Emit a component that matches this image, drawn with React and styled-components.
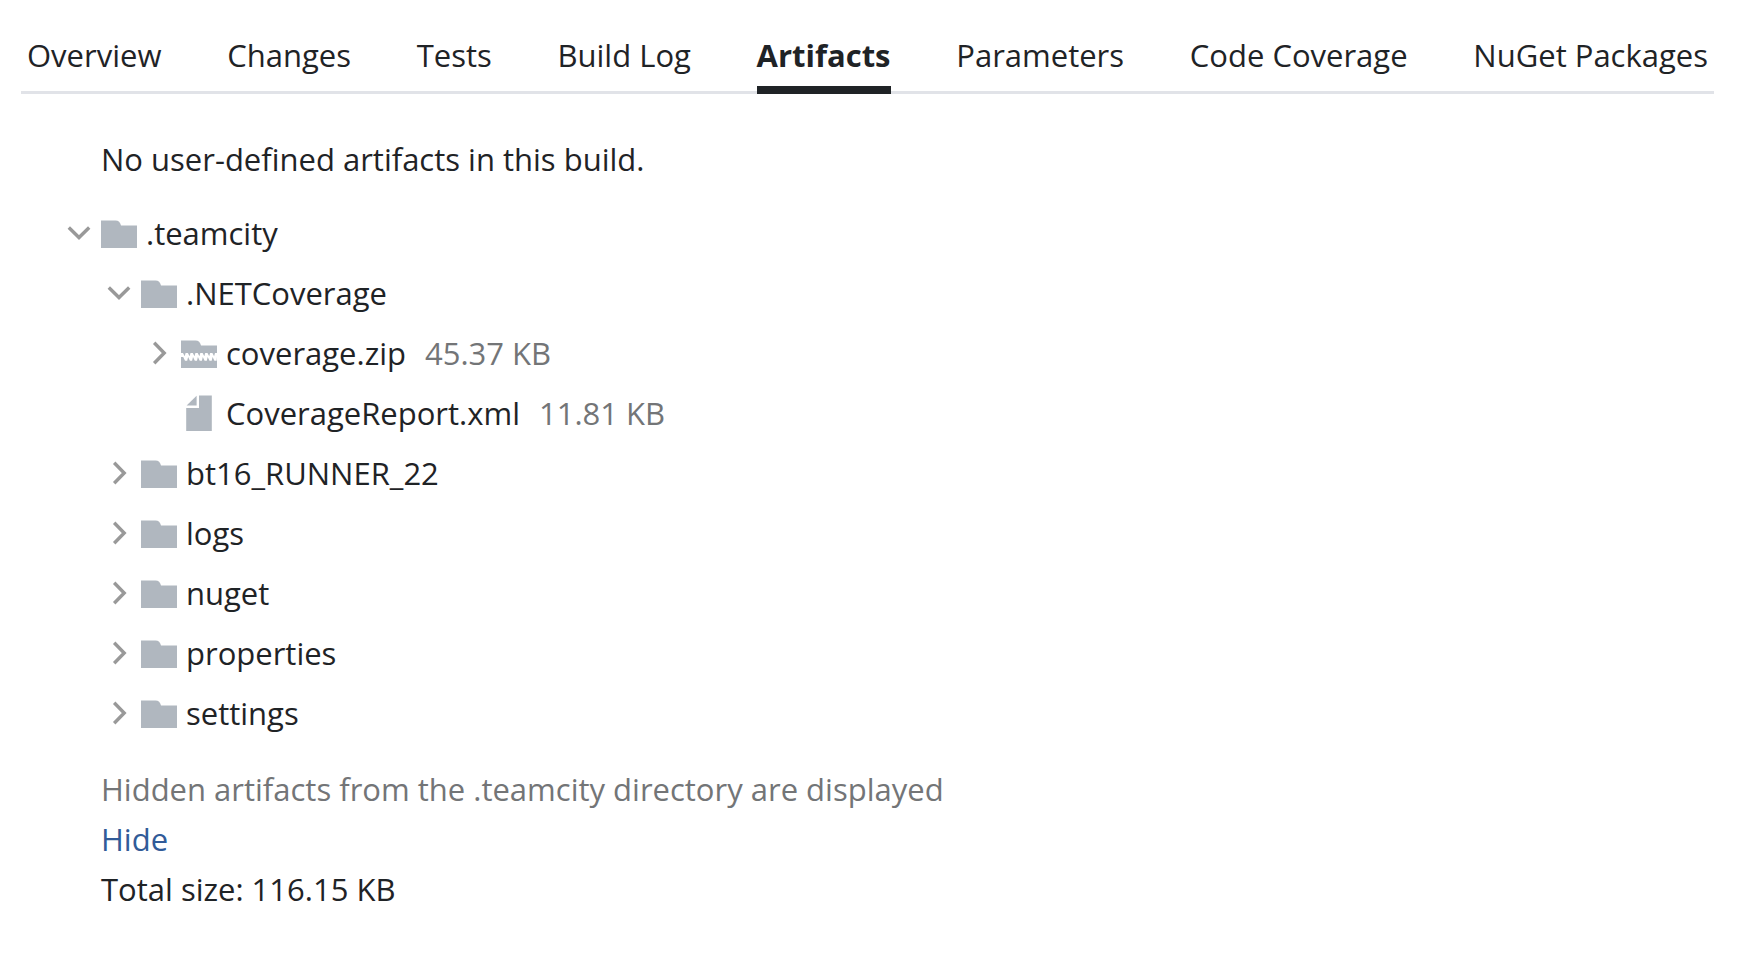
import React, { useState } from 'react';
import styled, { createGlobalStyle } from 'styled-components';

const GlobalStyle = createGlobalStyle`
  * {
    box-sizing: border-box;
  }

  body {
    margin: 0;
    background: #fff;
    color: #1f2326;
    font-family: 'Segoe UI', 'Open Sans', 'Noto Sans', sans-serif;
    font-size: 31px;
    line-height: 50px;
  }
`;

const Page = styled.div`
  padding: 30px 41px 30px 21px;
`;

const Tabs = styled.nav`
  display: flex;
  justify-content: space-between;
  padding: 0 6px;
  border-bottom: 3px solid #e1e3e8;
`;

const Tab = styled.a`
  height: 64px;
  margin-bottom: -3px;
  border-bottom: 8px solid ${props => (props.$active ? '#1f2326' : 'transparent')};
  color: inherit;
  font-weight: ${props => (props.$active ? 700 : 400)};
  line-height: 50px;
  text-decoration: none;
  white-space: nowrap;
`;

const Content = styled.main`
  padding: 40px 0 0 40px;
`;

const Text = styled.p`
  margin: 0;
  padding-left: 40px;
  color: ${props => (props.$muted ? '#737577' : 'inherit')};
`;

const Tree = styled.ul`
  margin: 0;
  padding: 0;
  list-style: none;
`;

const RootTree = styled(Tree)`
  padding: 19px 0 21px;
`;

const SubTree = styled(Tree)`
  padding-left: 40px;
`;

const Row = styled.div`
  display: flex;
  align-items: center;
  height: 60px;
`;

const Toggle = styled.button`
  display: flex;
  align-items: center;
  justify-content: center;
  width: 36px;
  height: 36px;
  margin-right: 4px;
  padding: 0;
  border: 0;
  background: none;
  cursor: pointer;
`;

const Spacer = styled.span`
  width: 40px;
`;

const Name = styled.span`
  margin-left: 9px;
`;

const Size = styled.span`
  margin-left: 19px;
  color: #737577;
`;

const LinkButton = styled.button`
  display: block;
  margin: 0 0 0 40px;
  padding: 0;
  border: 0;
  background: none;
  color: #315b98;
  font: inherit;
  cursor: pointer;
`;

const Chevron = ({ open }) => (
  <svg width="24" height="24" viewBox="0 0 24 24" fill="none" stroke="#999" strokeWidth="3.4" aria-hidden="true">
    <path d={open ? 'M1.8 6.5 L12 16.5 L22.2 6.5' : 'M7.2 1.8 L17.2 12 L7.2 22.2'} />
  </svg>
);

const FolderIcon = () => (
  <svg width="36" height="36" viewBox="0 0 36 36" fill="#b0b7bf" aria-hidden="true">
    <path d="M0 5.4 H14.5 C17.5 5.4 19.4 7.3 20 10.4 H36 V33 H0 Z" />
  </svg>
);

const ZipIcon = () => (
  <svg width="36" height="36" viewBox="0 0 36 36" fill="#b0b7bf" aria-hidden="true">
    <path d="M0 5.4 H14.5 C17.5 5.4 19.4 7.3 20 10.4 H36 V33 H0 Z" />
    <path
      transform="translate(0 1)"
      d="M0 17 H2 L3.7 20.2 L4.6 17 H6.9 L8.6 20.2 L9.5 17 H11.8 L13.5 20.2 L14.4 17 H16.7 L18.4 20.2 L19.3 17 H21.6 L23.3 20.2 L24.2 17 H26.5 L28.2 20.2 L29.1 17 H31.4 L33.1 20.2 L34 17 H36 V21 L35.6 24.7 H33.4 L31.6 21 L30.7 24.7 H28.5 L26.7 21 L25.8 24.7 H23.6 L21.8 21 L20.9 24.7 H18.7 L16.9 21 L16 24.7 H13.8 L12 21 L11.1 24.7 H8.9 L7.1 21 L6.2 24.7 H4 L2.2 21 H0 Z"
      fill="#fff"
    />
  </svg>
);

const FileIcon = () => (
  <svg width="36" height="36" viewBox="0 0 36 36" fill="#b0b7bf" aria-hidden="true">
    <path d="M18 0.4 H30.8 V36 H5.2 V13 H18 Z" />
    <path d="M15.6 0.8 V10.6 H5.6 Z" />
  </svg>
);

const icons = {
  folder: FolderIcon,
  zip: ZipIcon,
  file: FileIcon
};

const tabs = [
  'Overview',
  'Changes',
  'Tests',
  'Build Log',
  'Artifacts',
  'Parameters',
  'Code Coverage',
  'NuGet Packages'
];

const artifacts = {
  name: '.teamcity',
  type: 'folder',
  open: true,
  children: [
    {
      name: '.NETCoverage',
      type: 'folder',
      open: true,
      children: [
        { name: 'coverage.zip', type: 'zip', size: '45.37 KB' },
        { name: 'CoverageReport.xml', type: 'file', size: '11.81 KB' }
      ]
    },
    { name: 'bt16_RUNNER_22', type: 'folder' },
    { name: 'logs', type: 'folder' },
    { name: 'nuget', type: 'folder' },
    { name: 'properties', type: 'folder' },
    { name: 'settings', type: 'folder' }
  ]
};

const TreeItem = ({ item }) => {
  const [open, setOpen] = useState(Boolean(item.open));
  const Icon = icons[item.type];

  return (
    <li>
      <Row>
        {item.type === 'file' ? (
          <Spacer />
        ) : (
          <Toggle aria-label={item.name} aria-expanded={open} onClick={() => setOpen(!open)}>
            <Chevron open={open} />
          </Toggle>
        )}
        <Icon />
        <Name>{item.name}</Name>
        {item.size && <Size>{item.size}</Size>}
      </Row>
      {open && item.children && (
        <SubTree>
          {item.children.map(child => (
            <TreeItem key={child.name} item={child} />
          ))}
        </SubTree>
      )}
    </li>
  );
};

const App = () => {
  const [active, setActive] = useState('Artifacts');

  return (
    <Page>
      <GlobalStyle />
      <Tabs>
        {tabs.map(tab => (
          <Tab key={tab} href="#" $active={tab === active} onClick={() => setActive(tab)}>
            {tab}
          </Tab>
        ))}
      </Tabs>
      <Content>
        <Text>No user-defined artifacts in this build.</Text>
        <RootTree>
          <TreeItem item={artifacts} />
        </RootTree>
        <Text $muted>Hidden artifacts from the .teamcity directory are displayed</Text>
        <LinkButton>Hide</LinkButton>
        <Text>Total size: 116.15 KB</Text>
      </Content>
    </Page>
  );
};

export default App;
